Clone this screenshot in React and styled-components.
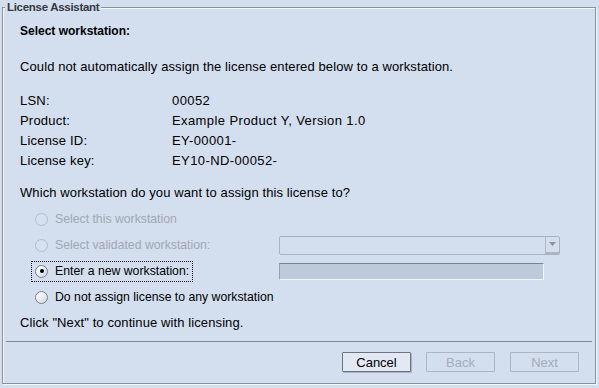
import styled, { createGlobalStyle } from 'styled-components';

const GlobalStyle = createGlobalStyle`
  html, body {
    margin: 0;
    padding: 0;
    background: #d3deef;
  }
  body {
    font-family: "Liberation Sans", Arial, sans-serif;
    font-size: 13px;
    color: #000;
  }
`;

const info = [
  ['LSN:', '00052'],
  ['Product:', 'Example Product Y, Version 1.0'],
  ['License ID:', 'EY-00001-'],
  ['License key:', 'EY10-ND-00052-'],
];

const options = [
  { label: 'Select this workstation', disabled: true },
  { label: 'Select validated workstation:', disabled: true, control: 'combo' },
  { label: 'Enter a new workstation:', checked: true, focused: true, control: 'field' },
  { label: 'Do not assign license to any workstation' },
];

const App = () => {
  return (
    <>
      <GlobalStyle />
      <Page>
        <Frame>
          <Title>License Assistant</Title>
          <Body>
            <Heading>Select workstation:</Heading>
            <Message>Could not automatically assign the license entered below to a workstation.</Message>
            <InfoGrid>
              {info.map(([k, v]) => (
                <InfoRow key={k}>
                  <span>{k}</span>
                  <Value>{v}</Value>
                </InfoRow>
              ))}
            </InfoGrid>
            <Message $gap={12}>Which workstation do you want to assign this license to?</Message>
            <Options>
              {options.map((o) => (
                <OptionRow key={o.label}>
                  <OptionLabel $focused={o.focused} $disabled={o.disabled}>
                    <Radio $checked={o.checked} $disabled={o.disabled} />
                    {o.label}
                  </OptionLabel>
                  {o.control === 'combo' && (
                    <Combo>
                      <ComboArrow>
                        <svg width="7" height="4" viewBox="0 0 7 4">
                          <path d="M0 0 H7 L3.5 4 Z" fill="#8d939d" />
                        </svg>
                      </ComboArrow>
                    </Combo>
                  )}
                  {o.control === 'field' && <TextField />}
                </OptionRow>
              ))}
            </Options>
            <Message $gap={3}>Click "Next" to continue with licensing.</Message>
            <Separator />
            <ButtonBar>
              <Button>Cancel</Button>
              <Button disabled>Back</Button>
              <Button disabled>Next</Button>
            </ButtonBar>
          </Body>
        </Frame>
      </Page>
    </>
  );
};

export default App;

const Page = styled.div`
  height: 100vh;
  display: flex;
  flex-direction: column;
  box-sizing: border-box;
  padding: 0 3px 4px 2px;
`;

const Frame = styled.fieldset`
  flex: 1;
  margin: 0;
  padding: 0;
  min-width: 0;
  display: flex;
  flex-direction: column;
  border: 1px solid #8b919a;
  box-shadow: 1px 1px 0 #f4f7fb, inset 1px 1px 0 #f4f7fb;
`;

const Title = styled.legend`
  margin-left: 2px;
  padding: 0 2px;
  font-weight: bold;
  font-size: 11.5px;
  letter-spacing: -0.3px;
  line-height: 14px;
  color: #36393e;
  background: #d3deef;
`;

const Body = styled.div`
  flex: 1;
  display: flex;
  flex-direction: column;
  padding: 7px 16px 11px 17px;
`;

const Heading = styled.div`
  font-weight: bold;
  font-size: 12px;
  line-height: 20px;
`;

const Message = styled.div`
  margin-top: ${(p) => (p.$gap !== undefined ? p.$gap : 16)}px;
  line-height: 20px;
  letter-spacing: 0.1px;
  white-space: nowrap;
`;

const InfoGrid = styled.div`
  margin-top: 14px;
  display: flex;
  flex-direction: column;
`;

const InfoRow = styled.div`
  display: grid;
  grid-template-columns: 152px 1fr;
  line-height: 20px;
  letter-spacing: 0.2px;
`;

const Value = styled.span`
  letter-spacing: 0.4px;
  white-space: nowrap;
`;

const Options = styled.div`
  margin-top: 3px;
  margin-left: 11px;
  display: flex;
  flex-direction: column;
`;

const OptionRow = styled.div`
  height: 26px;
  display: grid;
  grid-template-columns: 248px auto;
  align-items: center;
`;

const OptionLabel = styled.div`
  justify-self: start;
  display: inline-flex;
  align-items: center;
  gap: 7px;
  height: 19px;
  padding: 0 3px;
  font-size: 12.25px;
  border: 1px dotted ${(p) => (p.$focused ? '#000' : 'transparent')};
  color: ${(p) => (p.$disabled ? '#a2a8b2' : '#000')};
  white-space: nowrap;
`;

const Radio = styled.span`
  position: relative;
  width: 11px;
  height: 11px;
  border-radius: 50%;
  flex: none;
  border: 1px solid ${(p) => (p.$disabled ? '#b6bdc8' : '#7c828c')};
  background: ${(p) =>
    p.$disabled ? '#d6e0f0' : 'linear-gradient(135deg, #ffffff 0%, #e9edf4 55%, #c9d0db 100%)'};

  &::after {
    content: '';
    display: ${(p) => (p.$checked ? 'block' : 'none')};
    position: absolute;
    left: 3.5px;
    top: 3.5px;
    width: 4px;
    height: 4px;
    border-radius: 50%;
    background: #000;
  }
`;

const Combo = styled.div`
  width: 281px;
  height: 19px;
  box-sizing: border-box;
  border: 1px solid #aab2be;
  border-radius: 2px;
  display: flex;
  justify-content: flex-end;
`;

const ComboArrow = styled.div`
  width: 14px;
  box-sizing: border-box;
  border-left: 1px solid #b1b9c5;
  border-bottom: 2px solid #aeb6c2;
  display: flex;
  align-items: center;
  justify-content: center;
`;

const TextField = styled.div`
  width: 265px;
  height: 17px;
  box-sizing: border-box;
  background: #bccadc;
  border-top: 1px solid #7d8491;
  border-left: 1px solid #99a1ad;
  border-right: 1px solid #f1f4f9;
  border-bottom: 1px solid #f1f4f9;
`;

const Separator = styled.div`
  margin: auto -13px 0 -14px;
  height: 1px;
  background: #85898f;
  flex: none;
`;

const ButtonBar = styled.div`
  margin-top: 10px;
  display: flex;
  justify-content: flex-end;
  gap: 15px;
`;

const Button = styled.button`
  width: 69px;
  height: 20px;
  padding: 0;
  font-family: "Liberation Sans", Arial, sans-serif;
  font-size: 13px;
  border-radius: 1px;
  border: 1px solid ${(p) => (p.disabled ? '#adb5c1' : '#70757d')};
  color: ${(p) => (p.disabled ? '#a5acb7' : '#000')};
  background: ${(p) => (p.disabled ? 'transparent' : '#e3e9f4')};
  box-shadow: ${(p) => (p.disabled ? 'none' : '1px 1px 0 #aab2bf')};
`;
